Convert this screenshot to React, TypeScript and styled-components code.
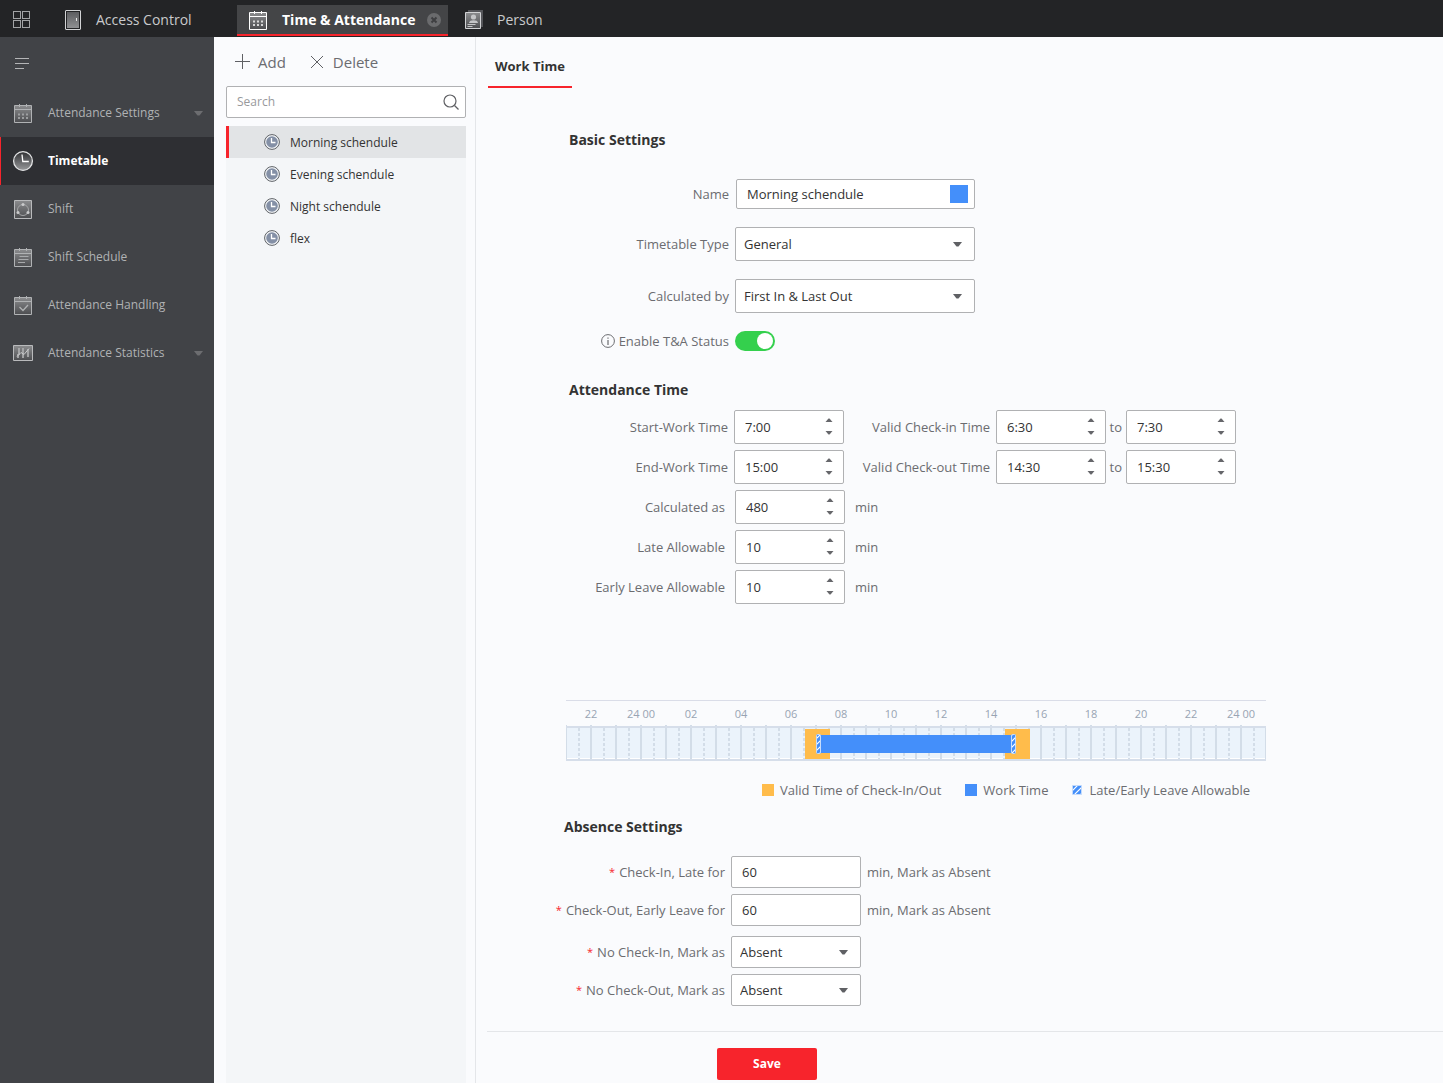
import React, { useId, useState } from "react";
import styled, { createGlobalStyle, css } from "styled-components";

const color = {
  bar: "#232426",
  tab: "#444547",
  side: "#414347",
  sideActive: "#2e2f33",
  red: "#f7242c",
  page: "#fafbfd",
  panel: "#f4f6f8",
  border: "#b0b1b3",
  hairline: "#e4e6e9",
  label: "#6b6c70",
  text: "#333333",
  blue: "#448ffa",
  orange: "#ffbc4b",
};

const GlobalStyle = createGlobalStyle`
  *, *::before, *::after { box-sizing: border-box; }
  body {
    margin: 0;
    background: ${color.page};
    color: ${color.text};
    font: 13px/20px "Open Sans", "Noto Sans", sans-serif;
  }
  button, input, select { font: inherit; color: inherit; }
  button { padding: 0; border: 0; background: none; cursor: pointer; }
  svg { display: block; flex: none; }
`;

/* ---------- shell ---------- */

const Shell = styled.div`
  display: grid;
  grid-template: 37px 1fr / 214px 262px 1fr;
  min-height: 100vh;
`;

const TopBar = styled.header`
  grid-column: 1 / -1;
  display: flex;
  align-items: center;
  padding-left: 13px;
  background: ${color.bar};
`;

const ModuleGridButton = styled.button`
  display: flex;
  margin: 3px 34px 0 0;
`;

const TabList = styled.nav`
  display: flex;
  align-items: flex-end;
  height: 100%;
  padding-bottom: 1px;
`;

const Tab = styled.div<{ $active?: boolean; $width: number }>`
  display: flex;
  align-items: center;
  width: ${(p) => p.$width}px;
  height: 31px;
  padding-bottom: 1px;
  color: #c9cacc;
  ${(p) =>
    p.$active &&
    css`
      margin-right: 17px;
      padding: 1px 7px 0 12px;
      background: ${color.tab};
      border-bottom: 2px solid ${color.red};
      color: #fff;
      font-weight: 700;
    `}
`;

const TabLink = styled.a<{ $gap: number }>`
  display: flex;
  flex: 1;
  align-items: center;
  gap: ${(p) => p.$gap}px;
  color: inherit;
  font-size: 14px;
  white-space: nowrap;
  text-decoration: none;
`;

const SideBar = styled.nav`
  display: flex;
  flex-direction: column;
  background: ${color.side};
`;

const CollapseButton = styled.button`
  display: flex;
  align-items: center;
  height: 52px;
  padding-left: 14px;
`;

const SideLink = styled.a<{ $active?: boolean }>`
  display: grid;
  grid-template-columns: 22px 1fr 10px;
  align-items: center;
  column-gap: 14px;
  height: 48px;
  padding: 0 10px 0 11px;
  border-left: 1px solid ${(p) => (p.$active ? color.red : "transparent")};
  background: ${(p) => (p.$active ? color.sideActive : "transparent")};
  color: ${(p) => (p.$active ? "#fff" : "#b0b2b4")};
  font-size: 12px;
  font-weight: ${(p) => (p.$active ? 700 : 400)};
  text-decoration: none;
  white-space: nowrap;
`;

/* ---------- timetable list ---------- */

const ListColumn = styled.aside`
  display: flex;
  flex-direction: column;
  padding: 0 9px 0 12px;
  border-right: 1px solid ${color.hairline};
`;

const Toolbar = styled.div`
  display: flex;
  align-items: center;
  gap: 24px;
  height: 49px;
  padding-left: 8px;
`;

const ToolButton = styled.button`
  display: flex;
  align-items: center;
  gap: 8px;
  color: ${color.label};
  font-size: 15px;
`;

const fieldBox = css`
  background: #fff;
  border: 1px solid ${color.border};
  border-radius: 2px;
`;

const SearchBox = styled.label`
  ${fieldBox}
  display: flex;
  align-items: center;
  height: 32px;
  padding: 0 6px 0 10px;
  font-size: 12px;
`;

const PlainInput = styled.input`
  flex: 1;
  min-width: 0;
  padding: 0;
  border: 0;
  outline: 0;
  background: none;
  &::placeholder {
    color: #98999c;
    opacity: 1;
  }
`;

const Timetables = styled.ul`
  flex: 1;
  margin: 8px 0 0;
  padding: 0;
  background: ${color.panel};
  list-style: none;
`;

const TimetableButton = styled.button<{ $active: boolean }>`
  display: flex;
  align-items: center;
  gap: 10px;
  width: 100%;
  height: 32px;
  padding-left: 35px;
  border-left: 3px solid ${(p) => (p.$active ? color.red : "transparent")};
  background: ${(p) => (p.$active ? "#e2e4e6" : "transparent")};
  font-size: 12px;
  line-height: 22px;
  > span {
    padding-top: 2px;
  }
`;

/* ---------- form ---------- */

const Main = styled.main`
  display: flex;
  flex-direction: column;
  min-width: 0;
  padding-left: 11px;
`;

const PageTabs = styled.div`
  display: flex;
  height: 51px;
  padding-left: 1px;
`;

const PageTab = styled.button`
  padding: 8px 7px 0;
  border-bottom: 2px solid ${color.red};
  font-weight: 700;
`;

const Form = styled.form`
  display: flex;
  flex: 1;
  flex-direction: column;
`;

const Sections = styled.div`
  flex: 1;
  padding-left: 73px;
`;

const Section = styled.section<{ $top: number; $indent: number }>`
  padding-top: ${(p) => p.$top}px;
  > h2 {
    padding-left: ${(p) => p.$indent}px;
  }
`;

const Heading = styled.h2`
  margin: 0;
  font-size: 14px;
  font-weight: 700;
  line-height: 22px;
`;

const Rows = styled.div<{ $top: number; $gap: number }>`
  display: flex;
  flex-direction: column;
  gap: ${(p) => p.$gap}px;
  padding-top: ${(p) => p.$top}px;
`;

const Row = styled.div`
  display: flex;
  align-items: center;
`;

const Label = styled.label<{ $width: number; $gap?: number }>`
  display: flex;
  flex: none;
  justify-content: flex-end;
  align-items: center;
  gap: 4px;
  width: ${(p) => p.$width}px;
  margin-right: ${(p) => p.$gap ?? 6}px;
  color: ${color.label};
  white-space: nowrap;
`;

const Required = styled.span`
  color: ${color.red};
  font-size: 11px;
`;

const Unit = styled.span<{ $gap: number }>`
  margin-left: ${(p) => p.$gap}px;
  color: ${color.label};
`;

const NameBox = styled.div`
  ${fieldBox}
  display: flex;
  align-items: center;
  width: 239px;
  height: 30px;
  padding: 0 6px 0 10px;
`;

const Swatch = styled.button`
  width: 18px;
  height: 18px;
  background: ${color.blue};
`;

const SelectBox = styled.div<{ $width: number; $height: number }>`
  ${fieldBox}
  display: grid;
  align-items: center;
  width: ${(p) => p.$width}px;
  height: ${(p) => p.$height}px;
  > * {
    grid-area: 1 / 1;
  }
  > svg {
    justify-self: end;
    margin-right: 12px;
    pointer-events: none;
  }
`;

const Select = styled.select`
  width: 100%;
  height: 100%;
  padding: 0 30px 0 8px;
  border: 0;
  outline: 0;
  background: none;
  appearance: none;
`;

const SpinBox = styled.div`
  ${fieldBox}
  display: flex;
  align-items: center;
  flex: none;
  width: 110px;
  height: 34px;
  padding: 0 10px;
`;

const SpinButtons = styled.div`
  display: flex;
  flex-direction: column;
  padding-bottom: 1px;
`;

const SpinButton = styled.button`
  display: flex;
  align-items: center;
  justify-content: center;
  width: 8px;
  height: 13px;
`;

const TextInput = styled.input`
  ${fieldBox}
  width: 130px;
  height: 32px;
  padding: 0 10px;
  outline: 0;
`;

const Switch = styled.input`
  display: flex;
  align-items: center;
  width: 40px;
  height: 20px;
  margin: 0;
  padding: 2px;
  border-radius: 10px;
  background: #b9bbbd;
  appearance: none;
  cursor: pointer;
  &::before {
    content: "";
    width: 16px;
    height: 16px;
    border-radius: 50%;
    background: #fff;
  }
  &:checked {
    justify-content: flex-end;
    background: #34d04d;
  }
`;

const TimelineBox = styled.div`
  width: 700px;
  margin: 96px 0 0 6px;
  border-top: 1px solid #dadde8;
`;

const HourLabels = styled.div`
  display: grid;
  grid-template-columns: repeat(14, 1fr);
  height: 24px;
  padding-top: 3px;
  color: #98a4b3;
  font-size: 11px;
  text-align: center;
`;

const Legend = styled.div`
  display: flex;
  align-items: center;
  justify-content: flex-end;
  gap: 24px;
  width: 690px;
  padding-top: 19px;
  color: ${color.label};
`;

const LegendItem = styled.span`
  display: flex;
  align-items: center;
  gap: 6px;
  white-space: nowrap;
`;

const LegendDot = styled.span<{ $color: string }>`
  width: 12px;
  height: 12px;
  background: ${(p) => p.$color};
`;

const Footer = styled.footer`
  display: flex;
  height: 52px;
  padding: 16px 0 0 230px;
  border-top: 1px solid ${color.hairline};
`;

const SaveButton = styled.button`
  width: 100px;
  height: 32px;
  border-radius: 2px;
  background: ${color.red};
  color: #fff;
  font-size: 12px;
  font-weight: 700;
`;

/* ---------- icons ---------- */

type ShadeProps = { id: string; from?: string; to?: string };

const Shade = ({ id, from = "#8b8c8e", to = "#4c4d50" }: ShadeProps) => (
  <linearGradient id={id} x1="0" y1="0" x2="0" y2="1">
    <stop offset="0" stopColor={from} />
    <stop offset="1" stopColor={to} />
  </linearGradient>
);

const GridIcon = () => (
  <svg width="18" height="18" fill="none" stroke="#a2a3a5">
    <rect x="0.5" y="0.5" width="7" height="7" />
    <rect x="9.5" y="0.5" width="7" height="7" />
    <rect x="0.5" y="9.5" width="7" height="7" />
    <rect x="9.5" y="9.5" width="7" height="7" />
  </svg>
);

const DoorIcon = () => {
  const id = useId();
  return (
    <svg width="16" height="20">
      <Shade id={id} from="#5c5d60" to="#909193" />
      <rect x="0.5" y="0.5" width="15" height="19" rx="0.5" fill="#232426" stroke="#d2d3d5" />
      <rect x="2" y="2" width="12" height="16" fill={`url(#${id})`} />
      <path d="M11.5 8v3" stroke="#e4e4e4" />
    </svg>
  );
};

const calendarMarks = {
  dots: (
    <path
      d="M4 10.500h2M8 10.500h2M12 10.500h2M4 14h2M8 14h2M12 14h2"
      stroke="currentColor"
      strokeWidth="2"
      opacity="0.75"
    />
  ),
  lines: <path d="M5.500 8.500h9M4.500 11.500h10M4 14.500h7" stroke="currentColor" opacity="0.9" />,
  check: <path d="M5.500 11l3.500 3.500 5-5.500" stroke="currentColor" strokeWidth="1.300" fill="none" />,
};

const CalendarIcon = ({ mark }: { mark: keyof typeof calendarMarks }) => {
  const id = useId();
  return (
    <svg width="19" height="19" viewBox="0 0 19 19">
      <Shade id={id} />
      <path d="M0.500 1.500h17v17h-17z" fill={`url(#${id})`} stroke="currentColor" />
      <path d="M0.500 5.500h17M5.500 0v3M12.500 0v3" stroke="currentColor" />
      {calendarMarks[mark]}
    </svg>
  );
};

const PersonIcon = () => {
  const id = useId();
  return (
    <svg width="18" height="20">
      <Shade id={id} />
      <path d="M3 1h14v16" fill="none" stroke="#55565a" strokeWidth="2" />
      <path d="M0.500 2.500h15v16h-15z" fill={`url(#${id})`} stroke="#d2d3d5" />
      <circle cx="8.500" cy="7" r="2.600" fill="#c4c5c7" />
      <path d="M4 13c.3-2 2-2.700 4.500-2.700s4.200.7 4.500 2.700z" fill="#c4c5c7" />
      <path d="M2.500 14.500h8M2.500 16.500h5" stroke="#c4c5c7" />
    </svg>
  );
};

const CloseDotIcon = () => (
  <svg width="14" height="14">
    <circle cx="7" cy="7" r="7" fill="#6a6b6d" />
    <path d="M4.500 4.500l5 5M9.500 4.500l-5 5" stroke="#3e3f41" strokeWidth="2" />
  </svg>
);

const CollapseIcon = () => (
  <svg width="15" height="12" stroke="#b4b5b7">
    <path d="M1 1.500h14M1 6.500h14M1 11.500h9" />
  </svg>
);

const BigClockIcon = () => {
  const id = useId();
  return (
    <svg width="22" height="22">
      <Shade id={id} from="#2f3033" to="#98999b" />
      <circle cx="11" cy="11" r="9.400" fill={`url(#${id})`} stroke="#e2e3e4" strokeWidth="1.300" />
      <path d="M10 4.500l.8 7h6" fill="none" stroke="#fff" strokeWidth="1.300" />
    </svg>
  );
};

const ShiftIcon = () => {
  const id = useId();
  return (
    <svg width="19" height="19">
      <Shade id={id} />
      <path d="M0.500 0.500h17v18h-17z" fill={`url(#${id})`} stroke="#b9babc" />
      <circle cx="9" cy="10" r="5.500" fill="none" stroke="#a4a5a7" />
      <g fill="#c9cacb">
        <circle cx="9" cy="4.500" r="1.500" />
        <circle cx="4" cy="12.500" r="1.500" />
        <circle cx="14" cy="12.500" r="1.500" />
      </g>
    </svg>
  );
};

const StatisticsIcon = () => {
  const id = useId();
  return (
    <svg width="20" height="16">
      <Shade id={id} />
      <path d="M0.500 0.500h19v15h-19z" fill={`url(#${id})`} stroke="#b9babc" />
      <path d="M6 3v7M10 3v10M15 4v8M5 9v4" stroke="#a9aaac" strokeWidth="1.800" />
      <path d="M4 11.500l4-4 3 2 5-6" fill="none" stroke="#c9cacb" />
    </svg>
  );
};

const ListClockIcon = () => (
  <svg width="16" height="16" fill="none">
    <circle cx="8" cy="8" r="7.400" fill="#f4f6f8" stroke="#5d6166" />
    <circle cx="8" cy="8" r="5.800" fill="#8490a6" />
    <path d="M7.500 4v4.500h4" stroke="#fff" strokeWidth="1.300" />
  </svg>
);

const PlusIcon = () => (
  <svg width="16" height="16" stroke="#5f6064">
    <path d="M1 7.500h15M8.500 0v15" />
  </svg>
);

const CrossIcon = () => (
  <svg width="15" height="14" stroke="#5f6064">
    <path d="M1 1l12 12M13 1L1 13" />
  </svg>
);

const SearchIcon = () => (
  <svg width="16" height="16" fill="none" stroke="#5f6064" strokeWidth="1.200">
    <circle cx="7" cy="7" r="6" />
    <path d="M11.500 11.500l4 4" />
  </svg>
);

const InfoIcon = () => (
  <svg width="14" height="14" fill="none" stroke="#6b6c70">
    <circle cx="7" cy="7" r="6.400" />
    <path d="M7 6v5M7 3.500v1.300" strokeWidth="1.200" />
  </svg>
);

const Caret = ({ fill = "#5f6064" }: { fill?: string }) => (
  <svg width="9" height="5" fill={fill}>
    <path d="M0 0h9L5.500 4.500h-2z" />
  </svg>
);

const SmallCaret = ({ up }: { up?: boolean }) => (
  <svg width="8" height="4" fill="#66676b">
    <path d={up ? "M0.500 4h7L4.500 0.500h-1z" : "M0.500 0h7L4.500 3.500h-1z"} />
  </svg>
);

const Hatch = ({ x, y, width, height }: { x: number; y: number; width: number; height: number }) => {
  const id = useId();
  return (
    <>
      <pattern id={id} width="6" height="6" patternUnits="userSpaceOnUse">
        <path d="M-1 7L7 -1M-1 1L1 -1M5 7L7 5" stroke="#fff" strokeWidth="1.200" />
      </pattern>
      <rect x={x} y={y} width={width} height={height} fill={color.blue} />
      <rect x={x} y={y} width={width} height={height} rx="1" fill={`url(#${id})`} stroke="#c6dcfb" />
    </>
  );
};

/* ---------- timeline ---------- */

const HOUR = 25;
const hourLabels = ["22", "24 00", "02", "04", "06", "08", "10", "12", "14", "16", "18", "20", "22", "24 00"];
const hours = Array.from({ length: 28 }, (_, i) => i * HOUR);

const Track = () => (
  <svg width="700" height="36" role="img" aria-label="Work time from 7:00 to 15:00">
    <rect y="1" width="700" height="35" fill="#ebf3fb" />
    <rect y="33" width="700" height="1" fill="#fff" />
    <g fill="#d3dde8">
      {hours.map((x) => (
        <rect key={x} x={x === 0 ? 0 : x - 1} width={x === 0 ? 1 : 2} height="34" />
      ))}
      <rect x="699" y="1" width="1" height="34" />
    </g>
    <g stroke="#d3dde8" strokeWidth="2" strokeDasharray="3 2">
      {hours.map((x) => (
        <path key={x} d={`M${x + 13} 3v31`} />
      ))}
    </g>
    <rect y="1" width="700" height="2" fill="#d6deea" />
    <rect y="34" width="700" height="2" fill="#d6deea" />
    <rect x="239" y="4" width="25" height="30" fill={color.orange} />
    <rect x="439" y="4" width="25" height="30" fill={color.orange} />
    <rect x="252" y="10" width="194" height="18" fill={color.blue} />
    <Hatch x={250.5} y={9.5} width={4} height={19} />
    <Hatch x={445.5} y={9.5} width={4} height={19} />
  </svg>
);

/* ---------- parts ---------- */

const sideItems = [
  { text: "Attendance Settings", icon: <CalendarIcon mark="dots" />, opens: true },
  { text: "Timetable", icon: <BigClockIcon />, active: true },
  { text: "Shift", icon: <ShiftIcon /> },
  { text: "Shift Schedule", icon: <CalendarIcon mark="lines" /> },
  { text: "Attendance Handling", icon: <CalendarIcon mark="check" /> },
  { text: "Attendance Statistics", icon: <StatisticsIcon />, opens: true },
];

const IconCell = styled.span`
  display: flex;
  justify-content: center;
`;

const timetables = ["Morning schendule", "Evening schendule", "Night schendule", "flex"];

const Spin = ({ id, value }: { id: string; value: string }) => (
  <SpinBox>
    <PlainInput id={id} defaultValue={value} />
    <SpinButtons>
      <SpinButton type="button" aria-label="Increase">
        <SmallCaret up />
      </SpinButton>
      <SpinButton type="button" aria-label="Decrease">
        <SmallCaret />
      </SpinButton>
    </SpinButtons>
  </SpinBox>
);

type DropProps = { id: string; options: string[]; width: number; height: number };

const Drop = ({ id, options, width, height }: DropProps) => (
  <SelectBox $width={width} $height={height}>
    <Select id={id}>
      {options.map((o) => (
        <option key={o}>{o}</option>
      ))}
    </Select>
    <Caret />
  </SelectBox>
);

const timeRows = [
  { id: "start", label: "Start-Work Time", value: "7:00", valid: "Valid Check-in Time", from: "6:30", to: "7:30" },
  { id: "end", label: "End-Work Time", value: "15:00", valid: "Valid Check-out Time", from: "14:30", to: "15:30" },
];

const minuteRows = [
  { id: "calc", label: "Calculated as", value: "480" },
  { id: "late", label: "Late Allowable", value: "10" },
  { id: "early", label: "Early Leave Allowable", value: "10" },
];

const absenceLimits = [
  { id: "late-absent", label: "Check-In, Late for" },
  { id: "early-absent", label: "Check-Out, Early Leave for" },
];

const absenceMarks = [
  { id: "no-in", label: "No Check-In, Mark as" },
  { id: "no-out", label: "No Check-Out, Mark as" },
];

export default function App() {
  const [selected, setSelected] = useState(0);
  const [status, setStatus] = useState(true);

  return (
    <>
      <GlobalStyle />
      <Shell>
        <TopBar>
          <ModuleGridButton aria-label="Modules">
            <GridIcon />
          </ModuleGridButton>
          <TabList>
            <Tab $width={172}>
              <TabLink href="#access" $gap={15}>
                <DoorIcon />
                Access Control
              </TabLink>
            </Tab>
            <Tab $width={211} $active>
              <TabLink href="#attendance" $gap={14}>
                <CalendarIcon mark="dots" />
                Time &amp; Attendance
              </TabLink>
              <button aria-label="Close tab">
                <CloseDotIcon />
              </button>
            </Tab>
            <Tab $width={112}>
              <TabLink href="#person" $gap={14}>
                <PersonIcon />
                Person
              </TabLink>
            </Tab>
          </TabList>
        </TopBar>

        <SideBar>
          <CollapseButton aria-label="Collapse menu">
            <CollapseIcon />
          </CollapseButton>
          {sideItems.map((item) => (
            <SideLink key={item.text} href="#" $active={item.active}>
              <IconCell>{item.icon}</IconCell>
              {item.text}
              {item.opens && <Caret fill="#6c6d70" />}
            </SideLink>
          ))}
        </SideBar>

        <ListColumn>
          <Toolbar>
            <ToolButton>
              <PlusIcon />
              Add
            </ToolButton>
            <ToolButton>
              <CrossIcon />
              Delete
            </ToolButton>
          </Toolbar>
          <SearchBox>
            <PlainInput type="search" placeholder="Search" aria-label="Search" />
            <SearchIcon />
          </SearchBox>
          <Timetables>
            {timetables.map((name, i) => (
              <li key={name}>
                <TimetableButton $active={i === selected} onClick={() => setSelected(i)}>
                  <ListClockIcon />
                  <span>{name}</span>
                </TimetableButton>
              </li>
            ))}
          </Timetables>
        </ListColumn>

        <Main>
          <PageTabs>
            <PageTab>Work Time</PageTab>
          </PageTabs>
          <Form onSubmit={(e) => e.preventDefault()}>
            <Sections>
              <Section $top={41} $indent={9}>
                <Heading>Basic Settings</Heading>
                <Rows $top={28} $gap={18}>
                  <Row>
                    <Label htmlFor="name" $width={169} $gap={7}>
                      Name
                    </Label>
                    <NameBox>
                      <PlainInput id="name" defaultValue="Morning schendule" />
                      <Swatch type="button" aria-label="Colour" />
                    </NameBox>
                  </Row>
                  <Row>
                    <Label htmlFor="type" $width={169}>
                      Timetable Type
                    </Label>
                    <Drop id="type" options={["General", "Flexible"]} width={240} height={34} />
                  </Row>
                  <Row>
                    <Label htmlFor="by" $width={169}>
                      Calculated by
                    </Label>
                    <Drop id="by" options={["First In & Last Out", "Each Check-In/Out"]} width={240} height={34} />
                  </Row>
                  <Row>
                    <Label htmlFor="status" $width={169}>
                      <InfoIcon />
                      Enable T&amp;A Status
                    </Label>
                    <Switch
                      id="status"
                      type="checkbox"
                      role="switch"
                      checked={status}
                      onChange={(e) => setStatus(e.target.checked)}
                    />
                  </Row>
                </Rows>
              </Section>

              <Section $top={28} $indent={9}>
                <Heading>Attendance Time</Heading>
                <Rows $top={9} $gap={6}>
                  {timeRows.map((r) => (
                    <Row key={r.id}>
                      <Label htmlFor={r.id} $width={168}>
                        {r.label}
                      </Label>
                      <Spin id={r.id} value={r.value} />
                      <Label htmlFor={`${r.id}-from`} $width={146}>
                        {r.valid}
                      </Label>
                      <Spin id={`${r.id}-from`} value={r.from} />
                      <Label htmlFor={`${r.id}-to`} $width={16} $gap={4}>
                        to
                      </Label>
                      <Spin id={`${r.id}-to`} value={r.to} />
                    </Row>
                  ))}
                  {minuteRows.map((r) => (
                    <Row key={r.id}>
                      <Label htmlFor={r.id} $width={165} $gap={10}>
                        {r.label}
                      </Label>
                      <Spin id={r.id} value={r.value} />
                      <Unit $gap={10}>min</Unit>
                    </Row>
                  ))}
                </Rows>
              </Section>

              <TimelineBox>
                <HourLabels>
                  {hourLabels.map((h, i) => (
                    <span key={i}>{h}</span>
                  ))}
                </HourLabels>
                <Track />
              </TimelineBox>
              <Legend>
                <LegendItem>
                  <LegendDot $color={color.orange} />
                  Valid Time of Check-In/Out
                </LegendItem>
                <LegendItem>
                  <LegendDot $color={color.blue} />
                  Work Time
                </LegendItem>
                <LegendItem>
                  <svg width="11" height="11">
                    <Hatch x={0.5} y={0.5} width={9} height={9} />
                  </svg>
                  Late/Early Leave Allowable
                </LegendItem>
              </Legend>

              <Section $top={16} $indent={4}>
                <Heading>Absence Settings</Heading>
                <Rows $top={18} $gap={6}>
                  {absenceLimits.map((r) => (
                    <Row key={r.id}>
                      <Label htmlFor={r.id} $width={165}>
                        <Required>*</Required>
                        {r.label}
                      </Label>
                      <TextInput id={r.id} defaultValue="60" />
                      <Unit $gap={6}>min, Mark as Absent</Unit>
                    </Row>
                  ))}
                </Rows>
                <Rows $top={10} $gap={6}>
                  {absenceMarks.map((r) => (
                    <Row key={r.id}>
                      <Label htmlFor={r.id} $width={165}>
                        <Required>*</Required>
                        {r.label}
                      </Label>
                      <Drop id={r.id} options={["Absent", "Late", "Normal"]} width={130} height={32} />
                    </Row>
                  ))}
                </Rows>
              </Section>
            </Sections>
            <Footer>
              <SaveButton type="submit">Save</SaveButton>
            </Footer>
          </Form>
        </Main>
      </Shell>
    </>
  );
}
